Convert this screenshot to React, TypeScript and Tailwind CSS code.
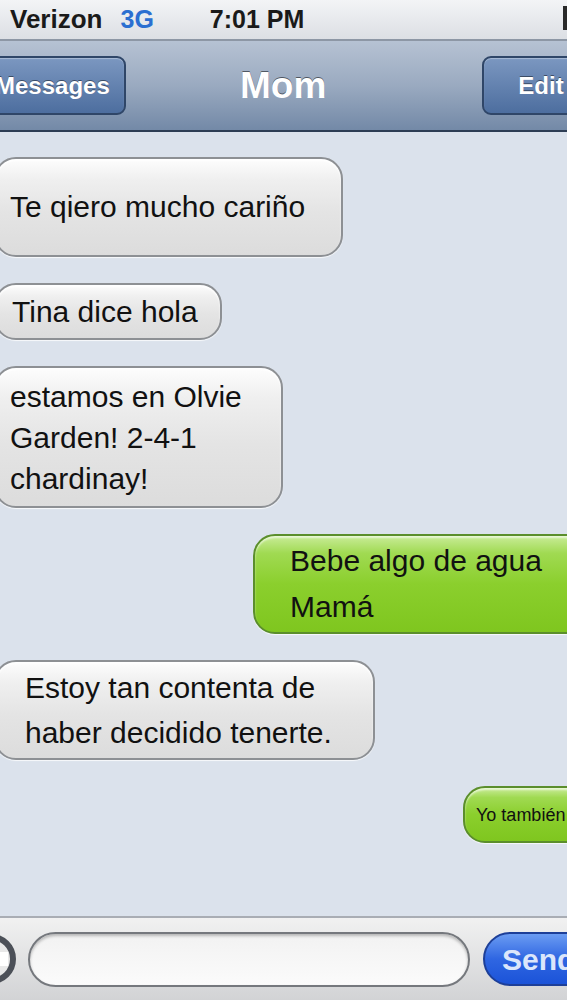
import React from 'react';

type Msg = {
  lines: string[];
  mine?: boolean;
  width: string;
  height: string;
  pad: string;
  size: string;
  leading: string;
};

const messages: Msg[] = [
  { lines: ['Te qiero mucho cariño'], width: 'w-[349px]', height: 'h-[100px]', pad: 'pl-[14px]', size: 'text-[30px]', leading: 'leading-[34px]' },
  { lines: ['Tina dice hola'], width: 'w-[228px]', height: 'h-[57px]', pad: 'pl-[16px]', size: 'text-[30px]', leading: 'leading-[34px]' },
  { lines: ['estamos en Olvie', 'Garden! 2-4-1', 'chardinay!'], width: 'w-[289px]', height: 'h-[142px]', pad: 'pl-[14px]', size: 'text-[30px]', leading: 'leading-[41px]' },
  { lines: ['Bebe algo de agua', 'Mamá'], mine: true, width: 'w-[334px]', height: 'h-[100px]', pad: 'pl-[35px]', size: 'text-[30px]', leading: 'leading-[46px]' },
  { lines: ['Estoy tan contenta de', 'haber decidido tenerte.'], width: 'w-[381px]', height: 'h-[100px]', pad: 'pl-[29px]', size: 'text-[30px]', leading: 'leading-[45px]' },
  { lines: ['Yo también'], mine: true, width: 'w-[124px]', height: 'h-[57px]', pad: 'pl-[11px]', size: 'text-[18px]', leading: 'leading-[22px]' },
];

const Bubble: React.FC<{ msg: Msg }> = ({ msg }) => {
  const look = msg.mine
    ? 'border-[#5b8e2c] bg-[linear-gradient(to_bottom,#c9ec98_0%,#a0da52_18%,#8bcf2d_50%,#7fc61f_100%)] shadow-[inset_0_2px_2px_rgba(255,255,255,0.6),0_1px_1px_rgba(255,255,255,0.8)]'
    : 'border-[#8d9094] bg-[linear-gradient(to_bottom,#fdfdfd_0%,#efefef_22%,#e4e4e4_55%,#dcdcdc_100%)] shadow-[inset_0_2px_2px_rgba(255,255,255,0.9),0_1px_1px_rgba(255,255,255,0.8)]';
  return (
    <div className={`flex ${msg.mine ? 'justify-end mr-[-20px]' : 'justify-start ml-[-6px]'}`}>
      <div
        className={`${msg.width} ${msg.height} ${msg.pad} ${look} flex flex-col justify-center rounded-[22px] border-2 text-[#111]`}
      >
        {msg.lines.map((l, i) => (
          <div key={i} className={`${msg.size} ${msg.leading} whitespace-nowrap`}>
            {l}
          </div>
        ))}
      </div>
    </div>
  );
};

export default function App() {
  return (
    <div
      className="w-[567px] h-[1000px] overflow-hidden flex flex-col bg-[#dbe2ec]"
      style={{ fontFamily: '"Liberation Sans", Arial, sans-serif' }}
    >
      {/* Status bar */}
      <div className="h-[41px] shrink-0 flex items-center bg-[linear-gradient(to_bottom,#f3f4f6,#dcdfe4)] border-b-2 border-[#8d97a5] relative">
        <span className="ml-[10px] text-[26px] font-bold text-[#1a1a1a]">Verizon</span>
        <span className="ml-[18px] text-[25px] font-bold text-[#2b6fd1]">3G</span>
        <span className="ml-[56px] text-[25px] font-bold text-[#1a1a1a]">7:01 PM</span>
        <div className="absolute right-0 top-[6px] w-[4px] h-[24px] bg-[#2a2a2a]" />
      </div>

      {/* Nav bar */}
      <div className="h-[91px] shrink-0 flex items-center bg-[linear-gradient(to_bottom,#b6c2d3_0%,#9aaac0_50%,#7389a7_100%)] border-b-2 border-[#2d3d54]">
        <div className="ml-[-20px] w-[146px] h-[59px] shrink-0 rounded-[9px] border-2 border-[#2f4668] bg-[linear-gradient(to_bottom,#7b97c0,#4d6e9f)] shadow-[inset_0_1px_1px_rgba(255,255,255,0.35)] flex items-center">
          <span className="ml-[13px] text-[24px] font-bold text-white [text-shadow:0_-1px_0_rgba(0,0,0,0.45)]">
            Messages
          </span>
        </div>
        <span className="ml-[114px] shrink-0 text-[37px] font-bold text-white [text-shadow:0_-1px_0_rgba(0,0,0,0.5)]">
          Mom
        </span>
        <div className="ml-[156px] w-[115px] h-[59px] shrink-0 rounded-[9px] border-2 border-[#2f4668] bg-[linear-gradient(to_bottom,#7b97c0,#4d6e9f)] shadow-[inset_0_1px_1px_rgba(255,255,255,0.35)] flex items-center">
          <span className="ml-[34px] text-[24px] font-bold text-white [text-shadow:0_-1px_0_rgba(0,0,0,0.45)]">
            Edit
          </span>
        </div>
      </div>

      {/* Messages */}
      <div className="flex-1 flex flex-col gap-[26px] pt-[25px] bg-[#dbe2ec]">
        {messages.map((m, i) => (
          <Bubble key={i} msg={m} />
        ))}
      </div>

      {/* Bottom bar */}
      <div className="h-[84px] shrink-0 flex items-center border-t-2 border-[#a9adb4] bg-[linear-gradient(to_bottom,#f1f1f1,#d2d3d5)]">
        <div className="ml-[-34px] w-[50px] h-[50px] shrink-0 rounded-full border-[6px] border-[#4c5058] bg-[#e8e8e8] flex items-center justify-end">
          <div className="w-[10px] h-[14px] bg-white mr-[2px]" />
        </div>
        <div className="ml-[12px] w-[442px] h-[55px] shrink-0 rounded-full border-2 border-[#75787d] bg-[linear-gradient(to_bottom,#f2f2f2,#fbfbfb)] shadow-[inset_0_2px_3px_rgba(0,0,0,0.25)]" />
        <div className="ml-[13px] w-[120px] h-[54px] shrink-0 rounded-full border-2 border-[#1d3f98] bg-[linear-gradient(to_bottom,#6b9cf2_0%,#2f66e2_50%,#1b53d8_100%)] flex items-center">
          <span className="ml-[17px] text-[30px] font-bold text-[#dbe6fb]">Send</span>
        </div>
      </div>
    </div>
  );
}
